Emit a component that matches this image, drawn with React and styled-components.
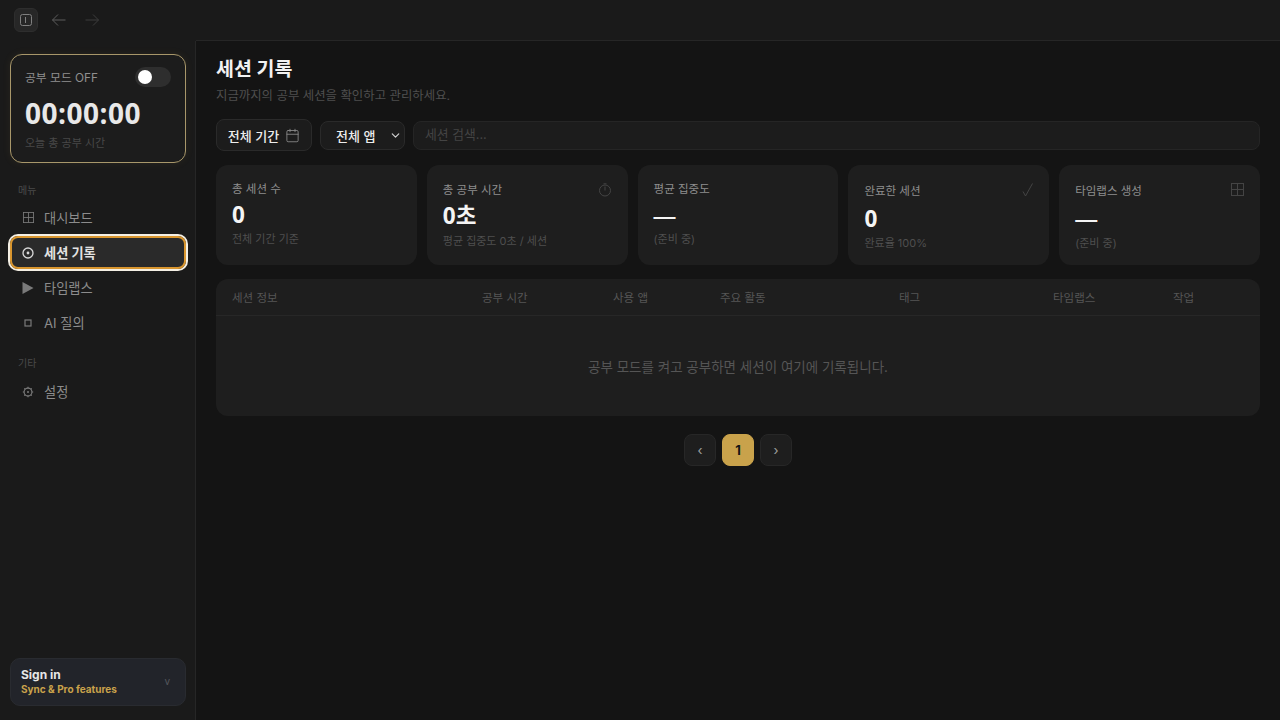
import React from 'react';
import styled, { createGlobalStyle } from 'styled-components';
import { Calendar, ChevronDown } from 'lucide-react';

const GlobalStyle = createGlobalStyle`
  html, body {
    margin: 0;
    height: 100%;
    background: #141414;
    font-family: Inter, "Noto Sans CJK KR", sans-serif;
  }
  * { box-sizing: border-box; }
`;

const Shell = styled.div`
  width: 1280px;
  height: 720px;
  display: flex;
  flex-direction: column;
  overflow: hidden;
  background: #141414;
`;

const TitleBar = styled.header`
  height: 41px;
  flex: none;
  display: flex;
  align-items: center;
  gap: 9px;
  padding: 0 14px 1px;
  background: #1a1a1a;
`;

const PanelToggle = styled.button`
  width: 24px;
  height: 24px;
  padding: 0;
  display: flex;
  align-items: center;
  justify-content: center;
  background: #272727;
  border: 1px solid #2e2e2e;
  border-radius: 6px;
  color: #808080;
`;

const NavArrow = styled.button`
  width: 24px;
  height: 24px;
  padding: 0;
  display: flex;
  align-items: center;
  justify-content: center;
  background: none;
  border: none;
  color: ${(p) => (p.$off ? '#3d3d3d' : '#5c5c5c')};
`;

const Body = styled.div`
  flex: 1;
  display: flex;
  min-height: 0;
`;

const Sidebar = styled.aside`
  width: 196px;
  flex: none;
  display: flex;
  flex-direction: column;
  padding: 13px 9px 14px 10px;
  background: #1a1a1a;
  border-right: 1px solid #262626;
`;

const StudyCard = styled.div`
  height: 109px;
  padding: 11px 14px;
  background: #1c1c1c;
  border: 1px solid #a8976a;
  border-radius: 12px;
  box-shadow: 0 0 8px rgba(201, 162, 75, 0.08);
`;

const StudyTop = styled.div`
  display: flex;
  align-items: center;
  justify-content: space-between;
  height: 21px;
`;

const StudyLabel = styled.span`
  font-size: 11.8px;
  color: #8f8f8f;
`;

const Toggle = styled.span`
  width: 36px;
  height: 20px;
  display: flex;
  align-items: center;
  padding-left: 3px;
  background: #2e2e2e;
  border-radius: 10px;

  &::before {
    content: '';
    width: 14px;
    height: 14px;
    border-radius: 50%;
    background: #fff;
  }
`;

const Clock = styled.div`
  margin-top: 7px;
  font-family: "Open Sans", sans-serif;
  font-size: 28px;
  letter-spacing: 0.5px;
  line-height: 38px;
  font-weight: 700;
  color: #e8e8e8;
`;

const ClockCaption = styled.div`
  margin-top: 3px;
  font-size: 11px;
  line-height: 16px;
  color: #484848;
`;

const SectionLabel = styled.div`
  margin-top: ${(p) => p.$top}px;
  padding-left: 8px;
  font-size: 10px;
  line-height: 14px;
  color: #4a4a4a;
`;

const NavList = styled.nav`
  display: flex;
  flex-direction: column;
  margin-top: ${(p) => p.$top}px;
`;

const NavItem = styled.a`
  height: 35px;
  display: flex;
  align-items: center;
  gap: 10px;
  padding-left: 12px;
  font-size: 13.2px;
  font-weight: ${(p) => (p.$active ? 700 : 400)};
  color: ${(p) => (p.$active ? '#e2e2e2' : '#8c8c8c')};
  border-radius: 8px;
  ${(p) =>
    p.$active &&
    `
    background: #2a2a2a;
    outline: 2px solid #d9962f;
    outline-offset: -2px;
    box-shadow: 0 0 0 2px #f4efe4;
    height: 33px;
    margin: 1px 0;
  `}
`;

const NavIcon = styled.span`
  width: 12px;
  height: 14px;
  flex: none;
  display: flex;
  align-items: center;
  justify-content: center;
  color: ${(p) => (p.$active ? '#d8d8d8' : '#7a7a7a')};
`;

const SignIn = styled.button`
  margin-top: auto;
  height: 48px;
  display: flex;
  align-items: center;
  justify-content: space-between;
  padding: 0 15px 2px 10px;
  background: #22242a;
  border: 1px solid #292b30;
  border-radius: 10px;
  font-family: inherit;
  text-align: left;
`;

const SignTitle = styled.div`
  font-size: 12px;
  line-height: 15px;
  font-weight: 700;
  color: #e6e6e6;
`;

const SignSub = styled.div`
  font-size: 10px;
  line-height: 14px;
  font-weight: 700;
  color: #c9a24b;
`;

const SignMark = styled.span`
  font-size: 10px;
  color: #55575c;
`;

const Main = styled.main`
  flex: 1;
  min-width: 0;
  padding: 15px 20px 0;
  background: #141414;
  border-top: 1px solid #262626;
  margin-top: -1px;
`;

const Title = styled.h1`
  margin: 0;
  font-size: 19.5px;
  line-height: 26px;
  font-weight: 700;
  color: #f2f2f2;
`;

const Subtitle = styled.p`
  margin: 5px 0 0;
  font-size: 12.4px;
  line-height: 18px;
  color: #4f4f4f;
`;

const Toolbar = styled.div`
  display: flex;
  align-items: center;
  gap: 8px;
  margin-top: 14px;
`;

const DateButton = styled.button`
  width: 96px;
  height: 32px;
  display: flex;
  align-items: center;
  justify-content: center;
  gap: 6px;
  padding: 0;
  background: #1c1c1c;
  border: 1px solid #2a2a2a;
  border-radius: 8px;
  font-family: inherit;
  font-size: 13px;
  font-weight: 500;
  color: #ededed;

  svg { color: #8a8a8a; }
`;

const AppFilter = styled.button`
  width: 85px;
  height: 29px;
  display: flex;
  align-items: center;
  justify-content: space-between;
  padding: 0 2px 0 15px;
  background: #1c1c1c;
  border: 1px solid #2a2a2a;
  border-radius: 8px;
  font-family: inherit;
  font-size: 13px;
  font-weight: 500;
  color: #ededed;

  svg { color: #d0d0d0; }
`;

const Search = styled.input`
  flex: 1;
  height: 29px;
  padding: 0 11px 2px;
  background: #1c1c1c;
  border: 1px solid #252525;
  border-radius: 8px;
  font-family: inherit;
  font-size: 12.8px;
  color: #ededed;

  &::placeholder { color: #444; opacity: 1; }
`;

const StatGrid = styled.section`
  display: grid;
  grid-template-columns: repeat(5, 1fr);
  gap: 10px;
  margin-top: 14px;
`;

const StatCard = styled.div`
  position: relative;
  height: 100px;
  padding: ${(p) => p.$top}px 16px 0;
  background: #1e1e1e;
  border-radius: 12px;
`;

const StatLabel = styled.div`
  font-size: 11.5px;
  line-height: 18px;
  color: #8e8e8e;
`;

const StatValue = styled.div`
  margin-top: ${(p) => p.$gap}px;
  font-family: "Open Sans", "Noto Sans CJK KR", sans-serif;
  font-size: 22.5px;
  line-height: 28px;
  font-weight: 700;
  color: #f4f4f4;
`;

const StatDash = styled.div`
  margin-top: ${(p) => p.$gap}px;
  font-family: Inter, sans-serif;
  font-size: 22px;
  line-height: 28px;
  font-weight: 500;
  color: #f4f4f4;
`;

const StatNote = styled.div`
  margin-top: ${(p) => p.$gap}px;
  font-size: 11px;
  line-height: 16px;
  color: #4f4f4f;
`;

const StatIcon = styled.span`
  position: absolute;
  top: 18px;
  right: 16px;
  width: 14px;
  height: 14px;
  display: flex;
  justify-content: flex-end;
  color: #444;
`;

const TablePanel = styled.section`
  height: 137px;
  margin-top: 14px;
  background: #1e1e1e;
  border-radius: 12px;
`;

const TableHead = styled.div`
  height: 37px;
  display: grid;
  grid-template-columns: 250px 131px 107px 179px 154px 120px 1fr;
  align-items: center;
  padding: 0 16px;
  border-bottom: 1px solid #272727;
  font-size: 11.5px;
  color: #565656;
`;

const EmptyNote = styled.div`
  height: 100px;
  display: flex;
  align-items: center;
  justify-content: center;
  font-size: 13.5px;
  color: #555;
`;

const Pager = styled.div`
  display: flex;
  justify-content: center;
  gap: 6px;
  margin-top: 18px;
`;

const PageButton = styled.button`
  width: 32px;
  height: 32px;
  padding: 0;
  background: ${(p) => (p.$current ? '#c9a24b' : '#1e1e1e')};
  border: 1px solid ${(p) => (p.$current ? '#c9a24b' : '#272727')};
  border-radius: 8px;
  font-family: inherit;
  font-size: 13px;
  font-weight: ${(p) => (p.$current ? 700 : 400)};
  color: ${(p) => (p.$current ? '#141414' : '#a0a0a0')};
`;

const GridIcon = ({ size = 13 }) => (
  <svg width={size} height={size} viewBox="0 0 13 13" fill="none" stroke="currentColor" strokeWidth="1">
    <rect x="0.5" y="0.5" width="12" height="12" />
    <path d="M6.5 .5v12M.5 6.5h12" />
  </svg>
);

const RecordIcon = () => (
  <svg width="12" height="12" viewBox="0 0 12 12" fill="none" stroke="currentColor" strokeWidth="1.3">
    <circle cx="6" cy="6" r="5" />
    <circle cx="6" cy="6" r="1.4" fill="currentColor" stroke="none" />
  </svg>
);

const PlayIcon = () => (
  <svg width="12" height="14" viewBox="0 0 12 14" fill="currentColor">
    <path d="M0.5 1v12l11-6z" />
  </svg>
);

const SquareIcon = () => (
  <svg width="8" height="8" viewBox="0 0 8 8" fill="none" stroke="currentColor" strokeWidth="1.2">
    <rect x="1" y="1" width="6" height="6" />
  </svg>
);

const GearIcon = () => (
  <svg width="12" height="12" viewBox="0 0 12 12" fill="none" stroke="currentColor" strokeWidth="1.1">
    <circle cx="6" cy="6" r="3.9" />
    <circle cx="6" cy="6" r="1" fill="currentColor" stroke="none" />
    <path d="M6 .8v1.3M6 9.9v1.3M.8 6h1.3M9.9 6h1.3M2.3 2.3l1 1M8.7 8.7l1 1M9.7 2.3l-1 1M3.3 8.7l-1 1" />
  </svg>
);

const StopwatchIcon = () => (
  <svg width="14" height="14" viewBox="0 0 14 14" fill="none" stroke="currentColor" strokeWidth="1">
    <circle cx="7" cy="7.5" r="5.5" />
    <path d="M7 7.5V3.5M5.5 .8h3" />
  </svg>
);

const CheckIcon = () => (
  <svg width="14" height="14" viewBox="0 0 14 14" fill="none" stroke="currentColor" strokeWidth="1">
    <path d="M4 8.5l2.5 4.5L13.5 .5" />
  </svg>
);

const ArrowIcon = ({ flip }) => (
  <svg width="16" height="14" viewBox="0 0 16 14" fill="none" stroke="currentColor" strokeWidth="1">
    <path d={flip ? 'M1.5 7h13M9 1.5L14.5 7 9 12.5' : 'M14.5 7h-13M7 1.5L1.5 7 7 12.5'} />
  </svg>
);

const columns = ['세션 정보', '공부 시간', '사용 앱', '주요 활동', '태그', '타임랩스', '작업'];

export default function App() {
  return (
    <Shell>
      <GlobalStyle />
      <TitleBar>
        <PanelToggle aria-label="사이드바">
          <svg width="14" height="14" viewBox="0 0 14 14" fill="none" stroke="currentColor" strokeWidth="1">
            <rect x="1.5" y="1.5" width="11" height="11" rx="2" />
            <path d="M6.5 4v6" />
          </svg>
        </PanelToggle>
        <NavArrow aria-label="뒤로">
          <ArrowIcon />
        </NavArrow>
        <NavArrow $off aria-label="앞으로">
          <ArrowIcon flip />
        </NavArrow>
      </TitleBar>
      <Body>
        <Sidebar>
          <StudyCard>
            <StudyTop>
              <StudyLabel>공부 모드 OFF</StudyLabel>
              <Toggle />
            </StudyTop>
            <Clock>00:00:00</Clock>
            <ClockCaption>오늘 총 공부 시간</ClockCaption>
          </StudyCard>

          <SectionLabel $top={20}>메뉴</SectionLabel>
          <NavList $top={3}>
            <NavItem>
              <NavIcon><GridIcon size={11} /></NavIcon>
              대시보드
            </NavItem>
            <NavItem $active>
              <NavIcon $active><RecordIcon /></NavIcon>
              세션 기록
            </NavItem>
            <NavItem>
              <NavIcon><PlayIcon /></NavIcon>
              타임랩스
            </NavItem>
            <NavItem>
              <NavIcon><SquareIcon /></NavIcon>
              AI 질의
            </NavItem>
          </NavList>

          <SectionLabel $top={16}>기타</SectionLabel>
          <NavList $top={4}>
            <NavItem>
              <NavIcon><GearIcon /></NavIcon>
              설정
            </NavItem>
          </NavList>

          <SignIn>
            <span>
              <SignTitle>Sign in</SignTitle>
              <SignSub>Sync &amp; Pro features</SignSub>
            </span>
            <SignMark>v</SignMark>
          </SignIn>
        </Sidebar>

        <Main>
          <Title>세션 기록</Title>
          <Subtitle>지금까지의 공부 세션을 확인하고 관리하세요.</Subtitle>

          <Toolbar>
            <DateButton>
              전체 기간
              <Calendar size={15} strokeWidth={1.4} />
            </DateButton>
            <AppFilter>
              전체 앱
              <ChevronDown size={13} strokeWidth={2.2} />
            </AppFilter>
            <Search placeholder="세션 검색..." />
          </Toolbar>

          <StatGrid>
            <StatCard $top={15}>
              <StatLabel>총 세션 수</StatLabel>
              <StatValue $gap={3}>0</StatValue>
              <StatNote $gap={2}>전체 기간 기준</StatNote>
            </StatCard>
            <StatCard $top={16}>
              <StatLabel>총 공부 시간</StatLabel>
              <StatIcon><StopwatchIcon /></StatIcon>
              <StatValue $gap={3}>0초</StatValue>
              <StatNote $gap={3}>평균 집중도 0초 / 세션</StatNote>
            </StatCard>
            <StatCard $top={15}>
              <StatLabel>평균 집중도</StatLabel>
              <StatDash $gap={5}>—</StatDash>
              <StatNote $gap={0}>(준비 중)</StatNote>
            </StatCard>
            <StatCard $top={17}>
              <StatLabel>완료한 세션</StatLabel>
              <StatIcon><CheckIcon /></StatIcon>
              <StatValue $gap={5}>0</StatValue>
              <StatNote $gap={2}>완료율 100%</StatNote>
            </StatCard>
            <StatCard $top={17}>
              <StatLabel>타임랩스 생성</StatLabel>
              <StatIcon><GridIcon /></StatIcon>
              <StatDash $gap={6}>—</StatDash>
              <StatNote $gap={1}>(준비 중)</StatNote>
            </StatCard>
          </StatGrid>

          <TablePanel>
            <TableHead>
              {columns.map((name) => (
                <span key={name}>{name}</span>
              ))}
            </TableHead>
            <EmptyNote>공부 모드를 켜고 공부하면 세션이 여기에 기록됩니다.</EmptyNote>
          </TablePanel>

          <Pager>
            <PageButton>‹</PageButton>
            <PageButton $current>1</PageButton>
            <PageButton>›</PageButton>
          </Pager>
        </Main>
      </Body>
    </Shell>
  );
}
